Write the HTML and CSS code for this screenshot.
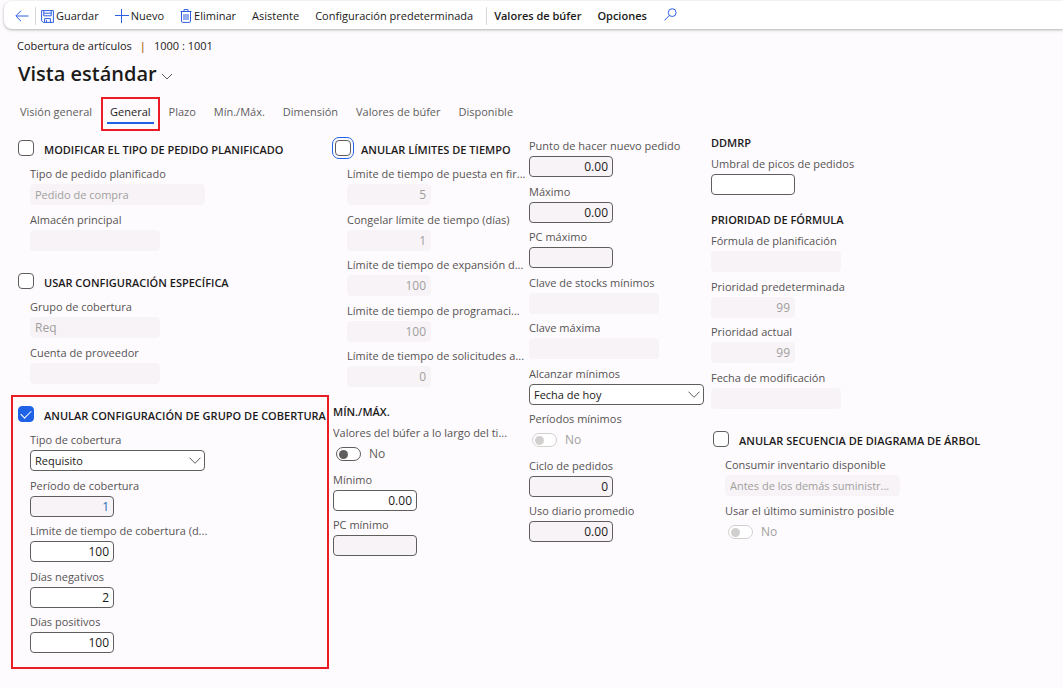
FILE: index.html
```html
<!DOCTYPE html>
<html lang="es">
<head>
<meta charset="utf-8">
<meta name="viewport" content="width=device-width, initial-scale=1">
<title>Cobertura de artículos</title>
<link rel="stylesheet" href="styles.css">
</head>
<body>
<nav class="toolbar" aria-label="Acciones">
  <button class="action back" aria-label="Atrás"><svg width="14" height="12" viewBox="0 0 14 12"><path d="M13.5 6H1M6 .8.8 6 6 11.2"/></svg></button>
  <span class="divider"></span>
  <button class="action save"><svg width="13" height="13" viewBox="0 0 13 13"><path d="M.6.6h11.8v11.8H2.2L.6 10.8zM2.8.6v5.2h7.4V.6M3.6 12.4V8.6h5.8v3.8M5.5 10.2v2.2M2.8 3.2h7.4"/></svg>Guardar</button>
  <button class="action"><svg width="14" height="14" viewBox="0 0 14 14"><path d="M6.5 0v14M0 6.500h14"/></svg>Nuevo</button>
  <button class="action delete"><svg width="12" height="14" viewBox="0 0 12 14"><path d="M.5 2.5h11M4 2.5V.6h4v1.9M1.5 2.5v9.600q0 1.300 1.300 1.300h6.400q1.300 0 1.300-1.300V2.500M4 5v6M6 5v6M8 5v6"/></svg>Eliminar</button>
  <button class="action">Asistente</button>
  <button class="action">Configuración predeterminada</button>
  <span class="divider"></span>
  <button class="action menu">Valores de búfer</button>
  <button class="action menu">Opciones</button>
  <button class="action search" aria-label="Buscar"><svg width="13" height="13" viewBox="0 0 13 13"><circle cx="8.2" cy="4.6" r="3.9"/><path d="M5.4 7.4.5 12.4"/></svg></button>
</nav>

<main class="page">
  <p class="crumbs"><span>Cobertura de artículos</span><span class="bar">|</span><span>1000 : 1001</span></p>
  <h1 class="view"><button class="view-button">Vista estándar<svg width="12" height="7" viewBox="0 0 12 7"><path d="m1 1 5 5 5-5"/></svg></button></h1>

  <div class="tabs" role="tablist">
    <button class="tab" role="tab">Visión general</button>
    <button class="tab active" role="tab" aria-selected="true">General</button>
    <button class="tab" role="tab">Plazo</button>
    <button class="tab" role="tab">Mín./Máx.</button>
    <button class="tab" role="tab">Dimensión</button>
    <button class="tab" role="tab">Valores de búfer</button>
    <button class="tab" role="tab">Disponible</button>
  </div>

  <form class="columns">
    <div class="column">
      <section class="group">
        <div class="head"><input class="check" type="checkbox" id="c1"><label class="title" for="c1">MODIFICAR EL TIPO DE PEDIDO PLANIFICADO</label></div>
        <div class="fields">
          <div class="field"><label for="f1">Tipo de pedido planificado</label><select class="box wide" id="f1" disabled><option>Pedido de compra</option></select></div>
          <div class="field"><label for="f2">Almacén principal</label><input class="box medium" id="f2" disabled></div>
        </div>
      </section>
      <section class="group">
        <div class="head"><input class="check" type="checkbox" id="c2"><label class="title" for="c2">USAR CONFIGURACIÓN ESPECÍFICA</label></div>
        <div class="fields">
          <div class="field"><label for="f3">Grupo de cobertura</label><input class="box medium" id="f3" value="Req" disabled></div>
          <div class="field"><label for="f4">Cuenta de proveedor</label><input class="box medium" id="f4" disabled></div>
        </div>
      </section>
      <section class="group marked">
        <div class="head"><input class="check" type="checkbox" id="c3" checked><label class="title" for="c3">ANULAR CONFIGURACIÓN DE GRUPO DE COBERTURA</label></div>
        <div class="fields">
          <div class="field"><label for="f5">Tipo de cobertura</label><span class="select wide"><select class="box" id="f5"><option>Requisito</option></select><svg width="12" height="7" viewBox="0 0 12 7"><path d="m.5 .7 5.500 5.600L11.500 .7"/></svg></span></div>
          <div class="field"><label for="f6">Período de cobertura</label><input class="box number link" id="f6" value="1" readonly></div>
          <div class="field"><label for="f7">Límite de tiempo de cobertura (d...</label><input class="box number" id="f7" value="100"></div>
          <div class="field"><label for="f8">Días negativos</label><input class="box number" id="f8" value="2"></div>
          <div class="field"><label for="f9">Días positivos</label><input class="box number" id="f9" value="100"></div>
        </div>
      </section>
    </div>

    <div class="column">
      <section class="group">
        <div class="head inset"><input class="check focused" type="checkbox" id="c4"><label class="title" for="c4">ANULAR LÍMITES DE TIEMPO</label></div>
        <div class="fields deep">
          <div class="field"><label for="g1">Límite de tiempo de puesta en fir...</label><input class="box number" id="g1" value="5" disabled></div>
          <div class="field"><label for="g2">Congelar límite de tiempo (días)</label><input class="box number" id="g2" value="1" disabled></div>
          <div class="field"><label for="g3">Límite de tiempo de expansión d...</label><input class="box number" id="g3" value="100" disabled></div>
          <div class="field"><label for="g4">Límite de tiempo de programaci...</label><input class="box number" id="g4" value="100" disabled></div>
          <div class="field"><label for="g5">Límite de tiempo de solicitudes a...</label><input class="box number" id="g5" value="0" disabled></div>
        </div>
      </section>
      <section class="group plain">
        <h2 class="title">MÍN./MÁX.</h2>
        <div class="field"><label for="g6">Valores del búfer a lo largo del ti...</label><span class="toggle-row"><input class="toggle" type="checkbox" role="switch" id="g6"><span>No</span></span></div>
        <div class="field"><label for="g7">Mínimo</label><input class="box number" id="g7" value="0.00"></div>
        <div class="field"><label for="g8">PC mínimo</label><input class="box number" id="g8" readonly></div>
      </section>
    </div>

    <div class="column third">
      <div class="field"><label for="h1">Punto de hacer nuevo pedido</label><input class="box number" id="h1" value="0.00" readonly></div>
      <div class="field"><label for="h2">Máximo</label><input class="box number" id="h2" value="0.00" readonly></div>
      <div class="field"><label for="h3">PC máximo</label><input class="box number" id="h3" readonly></div>
      <div class="field"><label for="h4">Clave de stocks mínimos</label><input class="box medium" id="h4" disabled></div>
      <div class="field"><label for="h5">Clave máxima</label><input class="box medium" id="h5" disabled></div>
      <div class="field"><label for="h6">Alcanzar mínimos</label><span class="select wide"><select class="box" id="h6"><option>Fecha de hoy</option></select><svg width="12" height="7" viewBox="0 0 12 7"><path d="m.5 .7 5.500 5.600L11.500 .7"/></svg></span></div>
      <div class="field"><label for="h7">Períodos mínimos</label><span class="toggle-row off"><input class="toggle" type="checkbox" role="switch" id="h7" disabled><span>No</span></span></div>
      <div class="field"><label for="h8">Ciclo de pedidos</label><input class="box number" id="h8" value="0" readonly></div>
      <div class="field"><label for="h9">Uso diario promedio</label><input class="box number" id="h9" value="0.00" readonly></div>
    </div>

    <div class="column fourth">
      <section class="group plain">
        <h2 class="title">DDMRP</h2>
        <div class="field"><label for="i1">Umbral de picos de pedidos</label><input class="box number" id="i1"></div>
      </section>
      <section class="group plain">
        <h2 class="title">PRIORIDAD DE FÓRMULA</h2>
        <div class="field"><label for="i2">Fórmula de planificación</label><input class="box medium" id="i2" disabled></div>
        <div class="field"><label for="i3">Prioridad predeterminada</label><input class="box number" id="i3" value="99" disabled></div>
        <div class="field"><label for="i4">Prioridad actual</label><input class="box number" id="i4" value="99" disabled></div>
        <div class="field"><label for="i5">Fecha de modificación</label><input class="box medium" id="i5" disabled></div>
      </section>
      <section class="group">
        <div class="head inset"><input class="check" type="checkbox" id="c5"><label class="title" for="c5">ANULAR SECUENCIA DE DIAGRAMA DE ÁRBOL</label></div>
        <div class="fields deep">
          <div class="field"><label for="i6">Consumir inventario disponible</label><select class="box wide" id="i6" disabled><option>Antes de los demás suministr...</option></select></div>
          <div class="field"><label for="i7">Usar el último suministro posible</label><span class="toggle-row off"><input class="toggle" type="checkbox" role="switch" id="i7" disabled><span>No</span></span></div>
        </div>
      </section>
    </div>
  </form>
</main>
</body>
</html>
```

FILE: styles.css
```css
* { box-sizing: border-box; }
body {
  margin: 0;
  background: #fefbff;
  color: #1b1a19;
  font: 12px/16px "Open Sans", "Noto Sans", sans-serif;
}
button, input, select { font: inherit; color: inherit; margin: 0; }
button { background: none; border: 0; padding: 0; white-space: nowrap; }
svg { fill: none; stroke: #2f5fe0; stroke-width: 1; flex: none; }

.toolbar {
  display: flex;
  align-items: center;
  height: 28px;
  margin: 1px 0 0 4px;
  padding: 2px 0 0 11px;
  background: #fff;
  border-radius: 8px 0 0 8px;
  box-shadow: 0 1px 3px rgba(0, 0, 0, .3);
}
.action { display: flex; align-items: center; gap: 2px; margin-right: 16px; font-size: 11px; line-height: 20px; }
.back { margin-right: 6px; }
.save { margin-left: 5px; }
.divider { width: 1px; height: 18px; background: #d8d6d9; }
.action + .divider { margin-left: -3px; }
.back + .divider { margin-left: 0; }
.divider + .menu { margin-left: 7px; }
.menu { font-weight: 600; }
.search { margin-left: 1px; }
.search svg { margin-bottom: 3px; }

.page { padding: 0 18px 20px; }
.crumbs { display: flex; gap: 8px; margin: 9px 0 0 -1px; font-size: 11px; }
.bar { color: #a8690a; font-weight: 600; }
.view { margin: 8px 0 0; font-size: 20px; line-height: 24px; font-weight: 600; }
.view-button { display: flex; align-items: center; gap: 4px; }
.view-button svg { stroke: #605e5c; margin-top: 4px; }

.tabs { display: flex; gap: 18px; margin: 16px 0 0 2px; font-size: 11px; }
.tab { position: relative; color: #605e5c; line-height: 20px; }
.active { color: #1b1a19; }
.active::before {
  content: "";
  position: absolute;
  inset: -5px -9px -9px;
  border: 2px solid #ec1c24;
}
.active::after {
  content: "";
  position: absolute;
  inset: auto -3px -2px;
  height: 2px;
  background: #1f62e6;
}

.columns {
  display: grid;
  grid-template-columns: 315px 196px 182px 1fr;
  margin-top: 13px;
  align-items: start;
}
.column { padding-top: 5px; }
.third { padding-top: 3px; }
.fourth { padding-top: 0; }
.group + .group { margin-top: 22px; }
.group + .plain { margin-top: 17px; }
.head { display: flex; align-items: flex-start; gap: 10px; height: 26px; }
.inset { padding-left: 2px; }
.title { margin: 0; font-size: 11px; line-height: 20px; font-weight: 600; white-space: nowrap; }
.plain .title { line-height: 16px; margin-bottom: 5px; }
.fields { padding-left: 12px; }
.deep { padding-left: 14px; }

.marked { position: relative; }
.marked::after {
  content: "";
  position: absolute;
  inset: -11px 4px -16px -7px;
  border: 2px solid #ec1c24;
  pointer-events: none;
}

.check {
  appearance: none;
  flex: none;
  width: 16px;
  height: 16px;
  background: #fff;
  border: 1px solid #605e5c;
  border-radius: 4px;
}
.check:checked { border-color: #1f62e6; background: #1f62e6; display: grid; place-items: center; }
.check:checked::before {
  content: "";
  width: 9px;
  height: 5px;
  margin-bottom: 3px;
  border: solid #fff;
  border-width: 0 0 1px 1px;
  transform: rotate(-45deg);
}
.focused { outline: 1px solid #1f62e6; outline-offset: 2px; }

.field { display: grid; justify-items: start; row-gap: 2px; }
.field:not(:last-child) { margin-bottom: 7px; }
.fields > .field:nth-child(even):not(:last-child),
.third > .field:nth-child(even) { margin-bottom: 6px; }
.plain > .field:nth-child(odd) { margin-bottom: 6px; }
.plain > .field:last-child { margin-bottom: 0; }
.field label { font-size: 11px; color: #565452; white-space: nowrap; }

.box {
  appearance: none;
  height: 21px;
  padding: 0 4px;
  line-height: 19px;
  background: #fff;
  border: 1px solid #605e5c;
  border-radius: 4px;
  outline: 0;
}
select.box { font-size: 11px; }
.box:read-only:not(select) { background: #f7f3f7; }
.box:disabled { background: #f7f3f7; border-color: #f7f3f7; color: #a19f9d; opacity: 1; }
.number { width: 84px; text-align: right; }
.medium { width: 130px; }
.wide { width: 175px; }
.link { color: #2b6cb8; }
.select { display: grid; align-items: center; }
.select > * { grid-area: 1 / 1; }
.select svg { justify-self: end; margin-right: 4px; stroke: #605e5c; pointer-events: none; }

.toggle-row { display: flex; align-items: center; gap: 8px; height: 22px; padding-left: 3px; color: #605e5c; }
.toggle {
  appearance: none;
  display: flex;
  align-items: center;
  width: 25px;
  height: 14px;
  padding: 0 2px;
  background: #fff;
  border: 1px solid #605e5c;
  border-radius: 7px;
}
.toggle::before { content: ""; width: 9px; height: 9px; border-radius: 50%; background: #605e5c; }
.off { color: #a19f9d; }
.off .toggle { border-color: #d2d0ce; }
.off .toggle::before { background: #d2d0ce; }
```
